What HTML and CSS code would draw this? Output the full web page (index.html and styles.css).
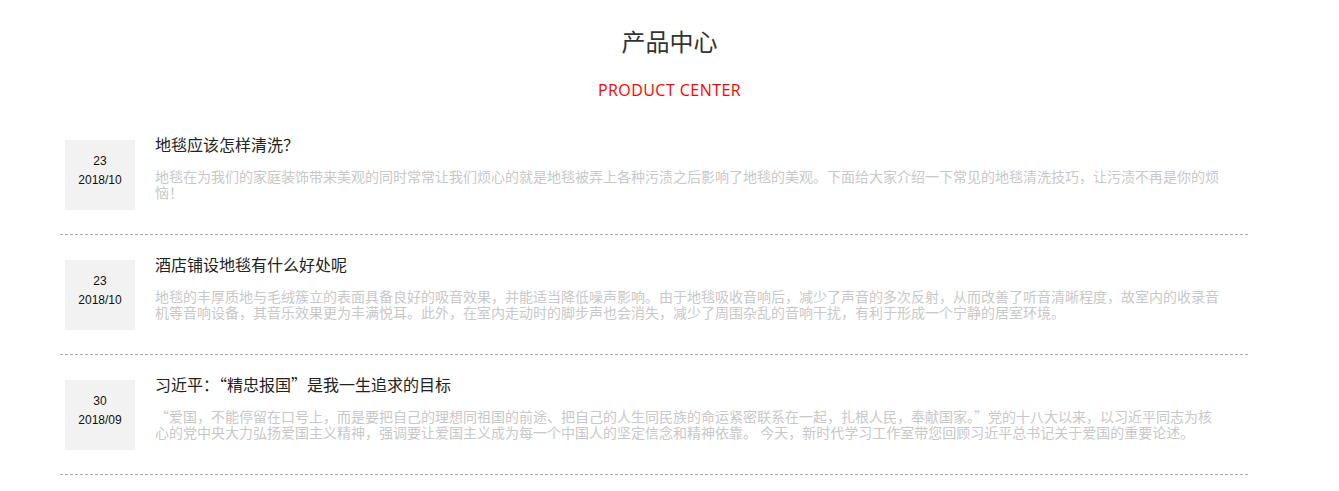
FILE: index.html
```html
<!DOCTYPE html>
<html lang="zh-CN">
<head>
    <meta charset="UTF-8">
    <title>产品中心</title>
    <link rel="stylesheet" href="styles.css">
</head>
<body>

<div class="section-head">
    <h2>产品中心</h2>
    <p class="en">PRODUCT CENTER</p>
</div>

<ul class="news-list">
    <li class="news-item">
        <div class="date">
            <span>23</span>
            <span>2018/10</span>
        </div>
        <div class="info">
            <h3>地毯应该怎样清洗？</h3>
            <p>地毯在为我们的家庭装饰带来美观的同时常常让我们烦心的就是地毯被弄上各种污渍之后影响了地毯的美观。下面给大家介绍一下常见的地毯清洗技巧，让污渍不再是你的烦恼！</p>
        </div>
    </li>
    <li class="news-item">
        <div class="date">
            <span>23</span>
            <span>2018/10</span>
        </div>
        <div class="info">
            <h3>酒店铺设地毯有什么好处呢</h3>
            <p>地毯的丰厚质地与毛绒簇立的表面具备良好的吸音效果，并能适当降低噪声影响。由于地毯吸收音响后，减少了声音的多次反射，从而改善了听音清晰程度，故室内的收录音机等音响设备，其音乐效果更为丰满悦耳。此外，在室内走动时的脚步声也会消失，减少了周围杂乱的音响干扰，有利于形成一个宁静的居室环境。</p>
        </div>
    </li>
    <li class="news-item">
        <div class="date">
            <span>30</span>
            <span>2018/09</span>
        </div>
        <div class="info">
            <h3>习近平：“精忠报国”是我一生追求的目标</h3>
            <p>“爱国，不能停留在口号上，而是要把自己的理想同祖国的前途、把自己的人生同民族的命运紧密联系在一起，扎根人民，奉献国家。”党的十八大以来，以习近平同志为核心的党中央大力弘扬爱国主义精神，强调要让爱国主义成为每一个中国人的坚定信念和精神依靠。 今天，新时代学习工作室带您回顾习近平总书记关于爱国的重要论述。</p>
        </div>
    </li>
</ul>

</body>
</html>
```

FILE: styles.css
```css
body {
    margin: 0;
    font-family: "Liberation Sans", "Noto Sans CJK SC", sans-serif;
    background-color: #fff;
    color: #333;
}
.section-head {
    text-align: center;
    padding-top: 28px;
}
.section-head h2 {
    margin: 0;
    font-size: 24px;
    line-height: 30px;
    font-weight: normal;
    color: #333;
}
.section-head .en {
    margin: 22px 0 0;
    font-family: "Open Sans", "Liberation Sans", sans-serif;
    font-size: 16px;
    letter-spacing: 0.45px;
    line-height: 20px;
    color: #ff0000;
}
.news-list {
    list-style: none;
    margin: 15px 0 0 60px;
    padding: 0;
    width: 1188px;
}
.news-item {
    display: flex;
    gap: 20px;
    padding: 25px 0 24px 5px;
    border-bottom: 1px dashed #aaa;
}
.date {
    flex: none;
    box-sizing: border-box;
    width: 70px;
    height: 70px;
    padding-top: 14px;
    background-color: #f2f2f2;
    display: flex;
    flex-direction: column;
    align-items: center;
    gap: 5px;
    font-size: 12px;
    line-height: 14px;
    color: #111;
}
.info {
    width: 1070px;
    margin-top: -6px;
    font-family: "Noto Sans CJK SC", sans-serif;
}
.info h3 {
    margin: 0 0 14px;
    font-size: 16px;
    line-height: 20px;
    font-weight: normal;
    color: #222;
}
.info p {
    margin: 0;
    font-size: 14px;
    line-height: 16px;
    color: #c8c8c8;
}
```
